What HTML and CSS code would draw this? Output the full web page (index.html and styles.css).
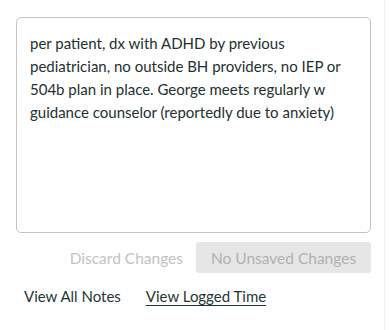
FILE: index.html
```
<!doctype html>
<html lang="en">
<head>
    <meta charset="UTF-8">
    <title>Notes</title>
    <link rel="stylesheet" href="styles.css">
</head>
<body>

<section class="note-card">
    <div class="note-box">per patient, dx with ADHD by previous pediatrician, no outside BH providers, no IEP or 504b plan in place. George meets regularly w guidance counselor (reportedly due to anxiety)</div>

    <div class="note-actions">
        <button class="btn-link" disabled>Discard Changes</button>
        <button class="btn-save" disabled>No Unsaved Changes</button>
    </div>

    <div class="note-links">
        <a href="#" class="plain">View All Notes</a>
        <a href="#" class="underline">View Logged Time</a>
    </div>
</section>

</body>
</html>
```

FILE: styles.css
```
body {
    margin: 0;
    font-family: Lato, "Open Sans", sans-serif;
    background: #fff;
}

.note-card {
    width: 385px;
    height: 330px;
    box-sizing: border-box;
    padding: 17px 13px 0 16px;
    border-right: 1px solid #f0f0f0;
    background: #fff;
}

.note-box {
    height: 216px;
    box-sizing: border-box;
    border: 1px solid #c4c4c4;
    border-radius: 5px;
    padding: 14px 20px 0 13px;
    font-size: 15px;
    line-height: 23px;
    color: #23302f;
}

.note-actions {
    display: flex;
    justify-content: flex-end;
    align-items: center;
    gap: 13px;
    margin-top: 9px;
}

.note-actions button {
    font: 15.5px Lato, sans-serif;
    border: 0;
    padding: 0;
}

.btn-link {
    background: none;
    color: #c2c2c2;
}

.btn-save {
    width: 175px;
    height: 31px;
    background: #e6e6e6;
    color: #b0b0b0;
    border-radius: 3px;
}

.note-links {
    display: flex;
    gap: 25px;
    padding-left: 8px;
    margin-top: 14px;
    font-size: 15px;
}

.note-links a {
    color: #1f3535;
    text-decoration: none;
}

.note-links a.underline {
    text-decoration: underline;
    text-underline-offset: 3px;
}
```
